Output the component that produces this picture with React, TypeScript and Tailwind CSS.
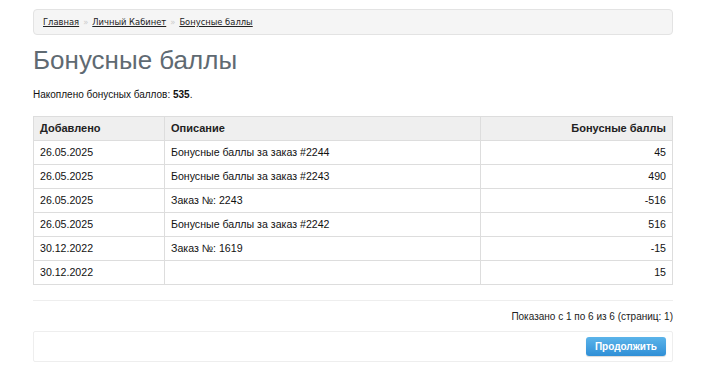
import React from 'react';

const rows = [
  { date: '26.05.2025', desc: 'Бонусные баллы за заказ #2244', points: '45' },
  { date: '26.05.2025', desc: 'Бонусные баллы за заказ #2243', points: '490' },
  { date: '26.05.2025', desc: 'Заказ №: 2243', points: '-516' },
  { date: '26.05.2025', desc: 'Бонусные баллы за заказ #2242', points: '516' },
  { date: '30.12.2022', desc: 'Заказ №: 1619', points: '-15' },
  { date: '30.12.2022', desc: '', points: '15' },
];

export default function App() {
  return (
    <div className="w-[710px] h-[380px] bg-white font-['Liberation_Sans',Arial,sans-serif] text-[10px] text-[#333]">
      <div className="w-[640px] ml-[33px] pt-[9px]">
        {/* breadcrumb */}
        <ul className="flex items-center h-[26px] px-[9px] bg-[#f5f5f5] border border-[#e3e3e3] rounded-[4px] font-['DejaVu_Sans_Condensed','DejaVu_Sans',Verdana,sans-serif] text-[9.3px]">
          <li><a className="text-[#222] underline">Главная</a></li>
          <li className="px-[4px] text-[#ccc]">»</li>
          <li><a className="text-[#222] underline">Личный Кабинет</a></li>
          <li className="px-[4px] text-[#ccc]">»</li>
          <li><a className="text-[#222] underline">Бонусные баллы</a></li>
        </ul>

        <h1 className="mt-[9px] text-[26px] leading-[32px] text-[#5f6a72]">Бонусные баллы</h1>

        <p className="mt-[12px] leading-[14px] text-[#111]">
          Накоплено бонусных баллов: <b>535</b>.
        </p>

        <table className="mt-[14px] w-full border-collapse border border-[#ddd] text-[10.6px]">
          <thead>
            <tr className="h-[24px] bg-[#efefef] text-[#222] font-bold text-[11px]">
              <td className="w-[131px] px-[6px] border border-[#ddd]">Добавлено</td>
              <td className="w-[316px] px-[6px] border border-[#ddd]">Описание</td>
              <td className="px-[6px] border border-[#ddd] text-right">Бонусные баллы</td>
            </tr>
          </thead>
          <tbody>
            {rows.map((r, i) => (
              <tr key={i} className="h-[24px] text-[#111]">
                <td className="px-[6px] border border-[#ddd]">{r.date}</td>
                <td className="px-[6px] border border-[#ddd]">{r.desc}</td>
                <td className="px-[6px] border border-[#ddd] text-right">{r.points}</td>
              </tr>
            ))}
          </tbody>
        </table>

        <div className="mt-[15px] border-t border-[#eee]" />

        <div className="mt-[8px] text-right text-[#222]">Показано с 1 по 6 из 6 (страниц: 1)</div>

        <div className="mt-[7px] h-[31px] flex items-center justify-end px-[6px] border border-[#eee] rounded-[2px]">
          <button className="h-[19px] px-[9px] rounded-[3px] text-white font-bold text-[10px] bg-gradient-to-b from-[#5bb4ea] to-[#2f8fd6] shadow-[0_1px_1px_rgba(0,0,0,0.15)]">
            Продолжить
          </button>
        </div>
      </div>
    </div>
  );
}
